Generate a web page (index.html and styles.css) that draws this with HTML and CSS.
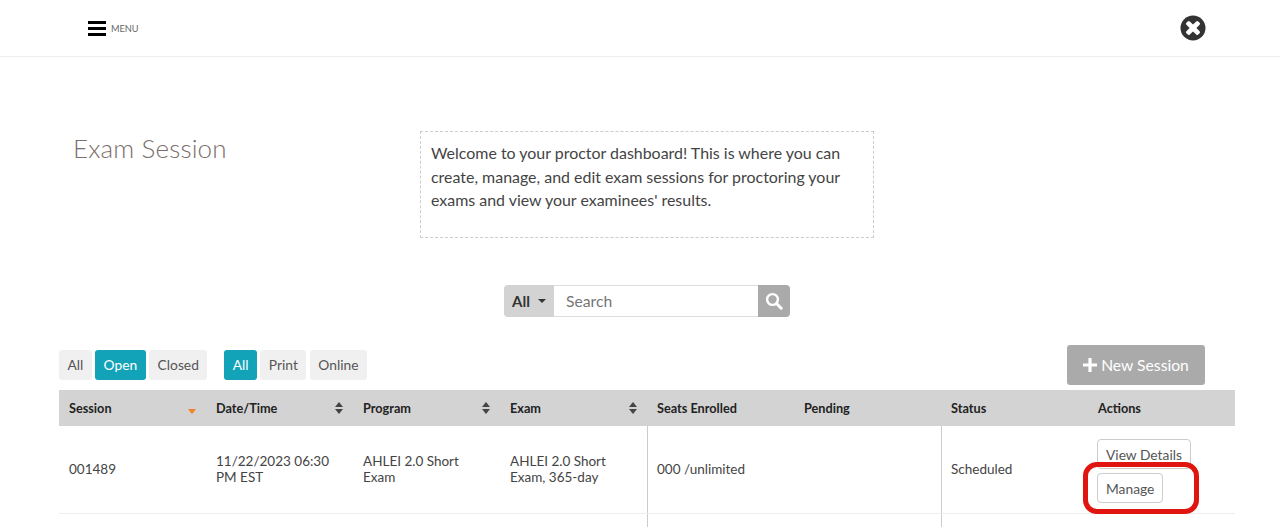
FILE: index.html
```html
<!DOCTYPE html>
<html lang="en">
<head>
<meta charset="utf-8">
<title>Exam Session</title>
<link rel="stylesheet" href="styles.css">
</head>
<body>
<header class="topbar">
  <div class="menu">
    <svg class="burger" width="18" height="15" viewBox="0 0 18 15"><path d="M0 0h18v3H0zM0 6h18v3H0zM0 12h18v3H0z" fill="#000"/></svg>
    <span class="menu-label">MENU</span>
  </div>
  <svg class="close" width="26" height="26" viewBox="0 0 26 26"><circle cx="13" cy="13" r="12.500" fill="#333"/><path d="M13 9.600l3.200-3.200a1.400 1.400 0 0 1 2 0l1.400 1.400a1.400 1.400 0 0 1 0 2L16.400 13l3.200 3.200a1.400 1.400 0 0 1 0 2l-1.400 1.400a1.400 1.400 0 0 1-2 0L13 16.400l-3.200 3.200a1.400 1.400 0 0 1-2 0l-1.400-1.400a1.400 1.400 0 0 1 0-2L9.600 13 6.400 9.800a1.400 1.400 0 0 1 0-2l1.400-1.400a1.400 1.400 0 0 1 2 0z" fill="#fff"/></svg>
</header>
<main>
  <section class="intro">
    <h1>Exam Session</h1>
    <p class="welcome">Welcome to your proctor dashboard! This is where you can create, manage, and edit exam sessions for proctoring your exams and view your examinees' results.</p>
  </section>
  <div class="search">
    <div class="search-scope"><b>All</b><span class="caret"></span></div>
    <div class="search-input">Search</div>
    <div class="search-btn">
      <svg width="18" height="18" viewBox="0 0 18 18"><circle cx="7.500" cy="7.500" r="5.400" fill="none" stroke="#fff" stroke-width="2.400"/><path d="M11.500 11.500l4.700 4.700" stroke="#fff" stroke-width="3" stroke-linecap="round"/></svg>
    </div>
  </div>
  <div class="toolbar">
    <div class="pills">
      <span class="pill">All</span><span class="pill on">Open</span><span class="pill">Closed</span>
    </div>
    <div class="pills second">
      <span class="pill on">All</span><span class="pill">Print</span><span class="pill">Online</span>
    </div>
    <div class="new-session"><svg width="14" height="14" viewBox="0 0 14 14"><path d="M5.400 0h3.200v5.400H14v3.200H8.600V14H5.400V8.600H0V5.400h5.400z" fill="#fff"/></svg>New Session</div>
  </div>
  <div class="table">
    <div class="row head">
      <div class="cell">Session<span class="sort-down"></span></div>
      <div class="cell">Date/Time<span class="sort"></span></div>
      <div class="cell">Program<span class="sort"></span></div>
      <div class="cell">Exam<span class="sort"></span></div>
      <div class="cell">Seats Enrolled</div>
      <div class="cell">Pending</div>
      <div class="cell">Status</div>
      <div class="cell">Actions</div>
    </div>
    <div class="row body-row">
      <div class="cell">001489</div>
      <div class="cell">11/22/2023 06:30 PM EST</div>
      <div class="cell">AHLEI 2.0 Short Exam</div>
      <div class="cell">AHLEI 2.0 Short Exam, 365-day</div>
      <div class="cell seats">000 /unlimited</div>
      <div class="cell"></div>
      <div class="cell status">Scheduled</div>
      <div class="cell actions">
        <span class="act">View Details</span>
        <span class="act">Manage</span>
      </div>
    </div>
    <div class="row rest">
      <div class="cell"></div><div class="cell"></div><div class="cell"></div><div class="cell"></div>
      <div class="cell seats"></div><div class="cell"></div><div class="cell status"></div><div class="cell"></div>
    </div>
  </div>
</main>
<div class="callout"></div>
</body>
</html>
```

FILE: styles.css
```css
* { box-sizing: border-box; }
html, body { height: 100%; }
body {
  margin: 0;
  overflow: hidden;
  background: #fff;
  color: #444;
  font-family: Lato, "Open Sans", sans-serif;
  font-size: 14px;
}
.topbar {
  height: 57px;
  border-bottom: 1px solid #eee;
  display: flex;
  align-items: center;
  justify-content: space-between;
  padding: 0 74px 1px 88px;
}
.menu { display: flex; align-items: center; gap: 5px; margin-top: 1px; }
.burger { display: block; }
.menu-label { font-size: 9.200px; color: #666; }
.close { display: block; }
main { padding: 0 45px 0 59px; }
.intro {
  display: flex;
  align-items: flex-start;
  padding: 74px 0 0 14px;
}
h1 {
  margin: 0;
  width: 347px;
  font-size: 26px;
  line-height: 34px;
  font-weight: 300;
  color: #7b6f6b;
  letter-spacing: 0.150px;
}
.welcome {
  margin: 0;
  width: 454px;
  height: 107px;
  border: 1px dashed #ccc;
  padding: 9px 10px;
  font-size: 15.950px;
  line-height: 23.500px;
  color: #444;
}
.search {
  display: flex;
  width: 286px;
  height: 32px;
  margin: 47px 0 0 445px;
}
.search-scope {
  width: 50px;
  background: #d3d3d3;
  border-radius: 4px 0 0 4px;
  display: flex;
  align-items: center;
  gap: 8px;
  padding-left: 8px;
  font-size: 15px;
  color: #333;
}
.caret {
  border-left: 4px solid transparent;
  border-right: 4px solid transparent;
  border-top: 4px solid #333;
}
.search-input {
  flex: 1;
  border-top: 1px solid #ddd;
  border-bottom: 1px solid #ddd;
  padding-left: 12px;
  font-size: 15.700px;
  line-height: 30px;
  color: #767676;
}
.search-btn {
  width: 32px;
  background: #aaa;
  border-radius: 0 4px 4px 0;
  display: flex;
  align-items: center;
  justify-content: center;
}
.toolbar {
  display: flex;
  align-items: flex-start;
  height: 45px;
  margin-top: 28px;
}
.pills { display: flex; gap: 3.600px; margin-top: 5px; }
.pills.second { margin-left: 17px; }
.pill {
  height: 30px;
  line-height: 30px;
  padding: 0 8.400px;
  background: #f0f0f0;
  border-radius: 3px;
  color: #555;
  font-size: 13.800px;
}
.pill.on { background: #13a3b9; color: #fff; }
.new-session {
  margin-left: auto;
  margin-right: 30px;
  width: 138px;
  height: 40px;
  padding-bottom: 1px;
  background: #aaa;
  border-radius: 3px;
  color: #fff;
  font-size: 15.700px;
  display: flex;
  align-items: center;
  justify-content: center;
  gap: 4px;
}
.table { width: 1176px; }
.row { display: grid; grid-template-columns: repeat(8, 147px); }
.head { height: 36px; background: #d3d3d3; color: #222; font-size: 12.700px; font-weight: 700; }
.head .cell { position: relative; display: flex; align-items: center; padding: 0 10px; }
.sort, .sort-down { position: absolute; right: 9px; top: 12px; width: 9px; height: 12px; }
.sort::before, .sort::after {
  content: "";
  position: absolute;
  left: 0;
  border-left: 4.500px solid transparent;
  border-right: 4.500px solid transparent;
}
.sort::before { top: 0; border-bottom: 5px solid #444; }
.sort::after { bottom: 0; border-top: 5px solid #444; }
.sort-down::after {
  content: "";
  position: absolute;
  left: 0;
  bottom: 0;
  border-left: 4.500px solid transparent;
  border-right: 4.500px solid transparent;
  border-top: 5px solid #f58220;
}
.body-row { height: 88px; border-bottom: 1px solid #eee; }
.body-row .cell {
  display: flex;
  align-items: center;
  padding: 0 10px 2px;
  font-size: 13.500px;
  line-height: 16px;
}
.body-row .cell:nth-child(2), .body-row .cell:nth-child(3), .body-row .cell:nth-child(4) { padding-right: 15px; }
.seats, .status { border-left: 1px solid #ccc; }
.body-row .seats, .body-row .status { padding-left: 9px; }
.body-row .actions {
  flex-direction: column;
  align-items: flex-start;
  justify-content: flex-start;
  padding: 13px 0 0 9px;
}
.act {
  display: block;
  height: 30px;
  line-height: 30px;
  padding: 0 8px;
  border: 1px solid #ccc;
  border-radius: 4px;
  background: #fff;
  color: #555;
  font-size: 13.800px;
}
.act + .act { margin-top: 4px; }
.rest { height: 13px; }
.callout {
  position: absolute;
  left: 1083px;
  top: 462px;
  width: 116px;
  height: 52px;
  border: 5px solid #e0150f;
  border-radius: 14px;
}
```
